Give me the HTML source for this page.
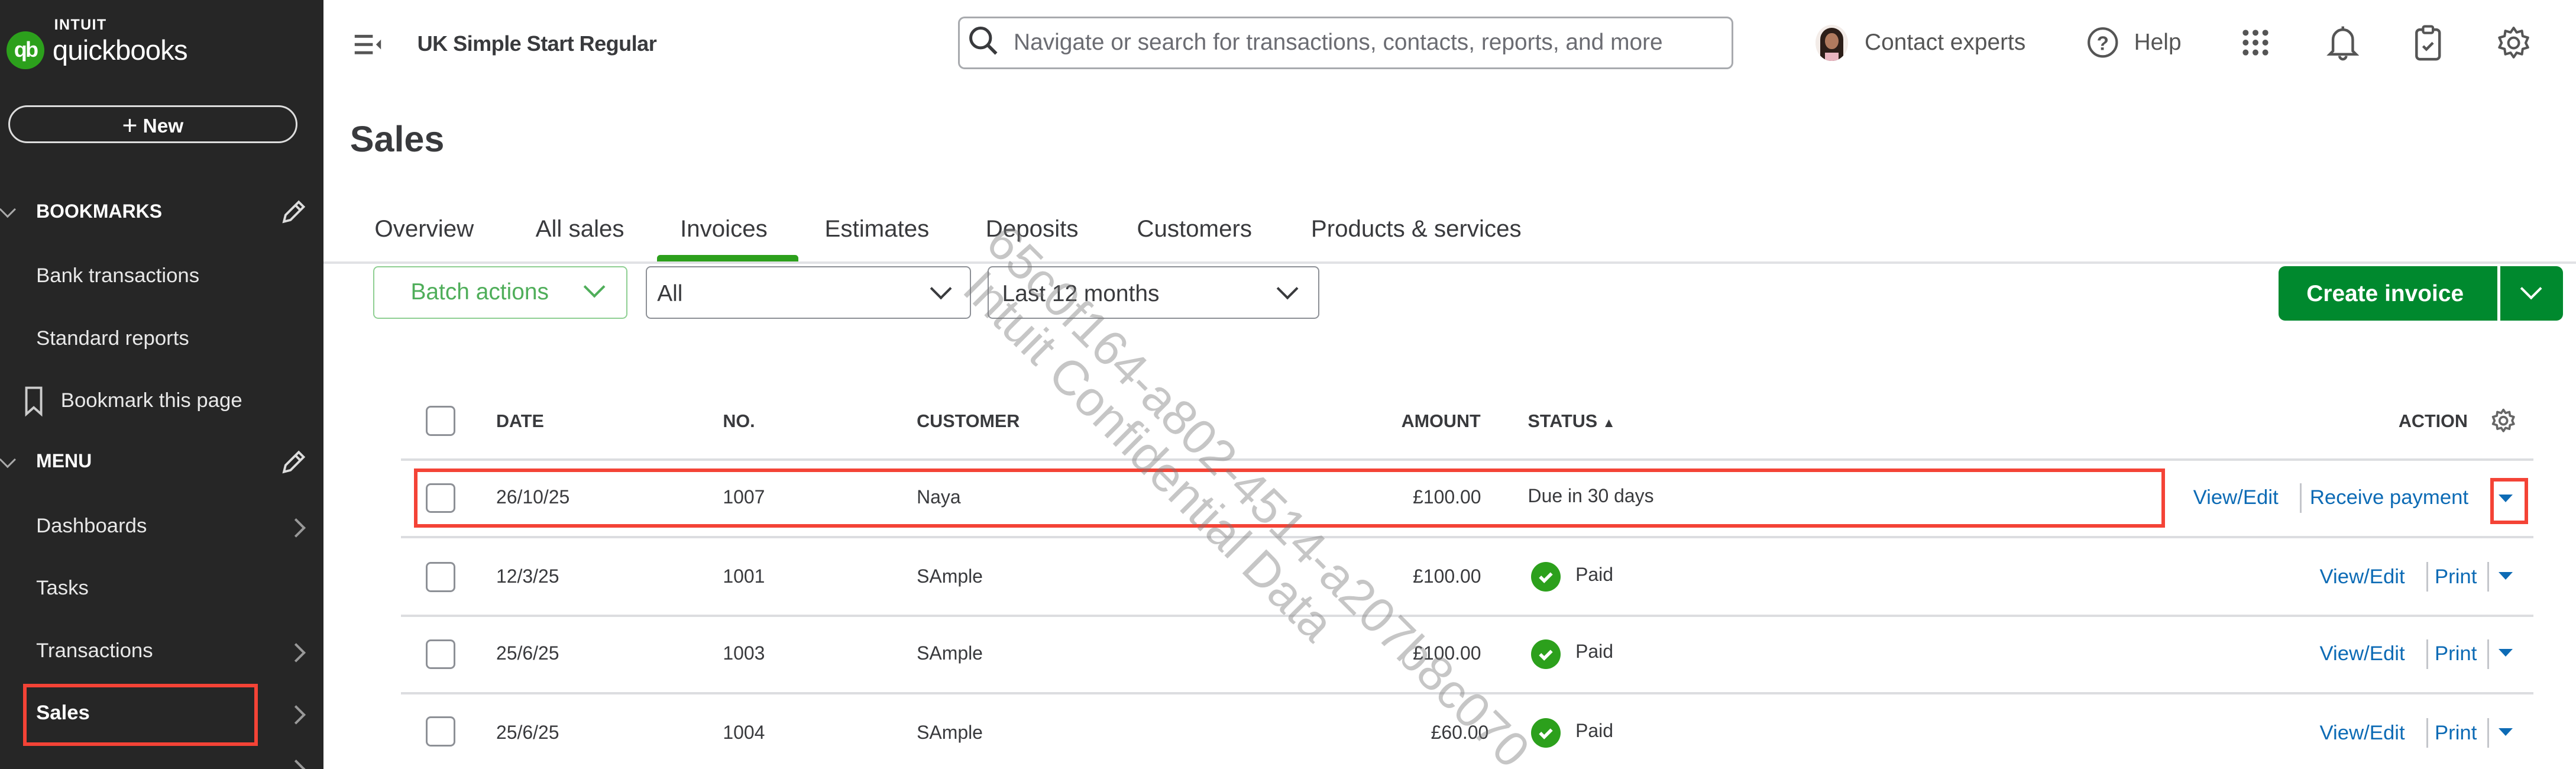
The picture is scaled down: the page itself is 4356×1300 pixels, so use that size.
<!DOCTYPE html>
<html><head><meta charset="utf-8">
<style>
html,body{margin:0;padding:0;}
body{width:4356px;height:1300px;overflow:hidden;background:#fff;font-family:"Liberation Sans",sans-serif;}
#w{position:absolute;left:0;top:0;width:1568px;height:468px;zoom:2.778;overflow:hidden;background:#fff;}
.a{position:absolute;white-space:nowrap;}
.sb{position:absolute;left:0;top:0;width:197px;height:468px;background:#262626;}
.sbt{position:absolute;color:#e8e8e8;font-size:12.5px;}
.sbh{position:absolute;color:#fff;font-size:11.5px;font-weight:bold;}
.chev{position:absolute;left:176px;width:7px;height:7px;border-right:1.5px solid #999;border-top:1.5px solid #999;transform:rotate(45deg);}
.tab{position:absolute;top:131px;font-size:14.5px;color:#393a3d;}
.hd{position:absolute;top:250px;font-size:11px;font-weight:bold;color:#393a3d;}
.cb{position:absolute;left:259px;width:16px;height:16px;border:1.3px solid #8d9096;border-radius:3px;background:#fff;}
.cell{position:absolute;font-size:11.5px;color:#393a3d;}
.ln{position:absolute;left:244px;width:1298px;height:1.5px;background:#dcdde0;}
.lk{position:absolute;font-size:12.5px;color:#0d6bb5;}
.sep{position:absolute;width:1px;height:18px;background:#c4c6cb;}
.tri{position:absolute;width:0;height:0;border-left:4.5px solid transparent;border-right:4.5px solid transparent;border-top:5px solid #0d6bb5;}
.ok{position:absolute;left:932px;width:18px;height:18px;border-radius:50%;background:#2ca01c;}
.sel{position:absolute;top:162px;height:32px;border:1px solid #8d9096;border-radius:3px;box-sizing:border-box;}
.dch{position:absolute;width:8px;height:8px;border-right:1.6px solid #393a3d;border-bottom:1.6px solid #393a3d;transform:rotate(45deg);}
.ic{position:absolute;}
</style></head><body><div id="w">
<div class="sb"></div>
<div class="a" style="left:4px;top:19px;width:23px;height:23px;border-radius:50%;background:#2ca01c;color:#fff;font-size:13px;font-weight:bold;line-height:22px;text-align:center;letter-spacing:-1px;">qb</div>
<div class="a" style="left:33px;top:10px;color:#fff;font-size:9px;font-weight:bold;letter-spacing:.5px;">INTUIT</div>
<div class="a" style="left:32px;top:21px;color:#fff;font-size:17px;letter-spacing:-.3px;">quickbooks</div>
<div class="a" style="left:5px;top:64px;width:176px;height:23px;border:1.3px solid #ddd;border-radius:12px;box-sizing:border-box;color:#fff;font-size:12px;font-weight:bold;text-align:center;line-height:21px;"><span style="font-size:16px;font-weight:normal;position:relative;top:1px;">+</span> New</div>
<div class="a" style="left:1px;top:124px;width:6px;height:6px;border-right:1.3px solid #aaa;border-bottom:1.3px solid #aaa;transform:rotate(45deg);"></div>
<div class="sbh" style="left:22px;top:122px;">BOOKMARKS</div>
<svg class="ic" style="left:169px;top:120px" width="18" height="18" viewBox="0 0 18 18"><path d="M4 15l1-4 8-8 3 3-8 8z M11 5l3 3" fill="none" stroke="#ddd" stroke-width="1.4"/></svg>
<div class="sbt" style="left:22px;top:161px;">Bank transactions</div>
<div class="sbt" style="left:22px;top:199px;">Standard reports</div>
<svg class="ic" style="left:14px;top:234px" width="14" height="20" viewBox="0 0 14 20"><path d="M2 2h9v16l-4.5-4-4.5 4z" fill="none" stroke="#ccc" stroke-width="1.4"/></svg>
<div class="sbt" style="left:37px;top:237px;">Bookmark this page</div>
<div class="a" style="left:1px;top:276px;width:6px;height:6px;border-right:1.3px solid #aaa;border-bottom:1.3px solid #aaa;transform:rotate(45deg);"></div>
<div class="sbh" style="left:22px;top:274px;">MENU</div>
<svg class="ic" style="left:169px;top:272px" width="18" height="18" viewBox="0 0 18 18"><path d="M4 15l1-4 8-8 3 3-8 8z M11 5l3 3" fill="none" stroke="#ddd" stroke-width="1.4"/></svg>
<div class="sbt" style="left:22px;top:313px;">Dashboards</div><div class="chev" style="top:317px;"></div>
<div class="sbt" style="left:22px;top:351px;">Tasks</div>
<div class="sbt" style="left:22px;top:389px;">Transactions</div><div class="chev" style="top:393px;"></div>
<div class="sbt" style="left:22px;top:427px;color:#fff;font-weight:bold;">Sales</div><div class="chev" style="top:431px;"></div>
<div class="a" style="left:14px;top:416px;width:143px;height:38px;border:2.5px solid #f44336;box-sizing:border-box;"></div>
<div class="chev" style="top:464px;"></div>
<svg class="ic" style="left:215px;top:19px" width="20" height="16" viewBox="0 0 20 16"><path d="M1 3h11M1 8h11M1 13h11" stroke="#555" stroke-width="1.8"/><path d="M17 5l-3 3 3 3z" fill="#555"/></svg>
<div class="a" style="left:254px;top:19px;font-size:13px;color:#393a3d;font-weight:bold;letter-spacing:-.2px;">UK Simple Start Regular</div>
<div class="a" style="left:583px;top:10px;width:472px;height:32px;border:1.3px solid #a8aaae;border-radius:4px;box-sizing:border-box;"></div>
<svg class="ic" style="left:589px;top:15px" width="20" height="20" viewBox="0 0 20 20"><circle cx="8" cy="8" r="6" fill="none" stroke="#393a3d" stroke-width="1.8"/><path d="M12.5 12.5l5 5" stroke="#393a3d" stroke-width="2"/></svg>
<div class="a" style="left:617px;top:18px;font-size:14px;color:#6b6c72;width:430px;overflow:hidden;">Navigate or search for transactions, contacts, reports, and more</div>
<div class="a" style="left:1105px;top:15px;width:20px;height:22px;border-radius:50%;background:#f3ece8;overflow:hidden;"><div style="position:absolute;left:3px;top:2px;width:14px;height:20px;border-radius:7px 7px 2px 2px;background:#2c1e18;"></div><div style="position:absolute;left:6px;top:5px;width:8px;height:10px;border-radius:50%;background:#b07a5e;"></div><div style="position:absolute;left:6px;top:17px;width:8px;height:6px;background:#e9b6c0;"></div></div>
<div class="a" style="left:1135px;top:18px;font-size:14px;color:#555;">Contact experts</div>
<svg class="ic" style="left:1270px;top:16px" width="20" height="20" viewBox="0 0 20 20"><circle cx="10" cy="10" r="8.5" fill="none" stroke="#555" stroke-width="1.5"/><text x="10" y="14.5" font-size="12" font-family="Liberation Sans" font-weight="bold" text-anchor="middle" fill="#555">?</text></svg>
<div class="a" style="left:1299px;top:18px;font-size:14px;color:#555;">Help</div>
<svg class="ic" style="left:1364px;top:17px" width="18" height="18" viewBox="0 0 18 18" fill="#555"><circle cx="3" cy="3" r="1.8"/><circle cx="9" cy="3" r="1.8"/><circle cx="15" cy="3" r="1.8"/><circle cx="3" cy="9" r="1.8"/><circle cx="9" cy="9" r="1.8"/><circle cx="15" cy="9" r="1.8"/><circle cx="3" cy="15" r="1.8"/><circle cx="9" cy="15" r="1.8"/><circle cx="15" cy="15" r="1.8"/></svg>
<svg class="ic" style="left:1416px;top:14px" width="20" height="24" viewBox="0 0 20 24"><path d="M10 2v2M4 17V10a6 6 0 0 1 12 0v7l2 2H2z M8 20a2 2 0 0 0 4 0" fill="none" stroke="#555" stroke-width="1.6"/></svg>
<svg class="ic" style="left:1468px;top:14px" width="20" height="24" viewBox="0 0 20 24"><rect x="3" y="4" width="14" height="18" rx="2" fill="none" stroke="#555" stroke-width="1.6"/><rect x="7" y="2" width="6" height="4" rx="1" fill="#fff" stroke="#555" stroke-width="1.5"/><path d="M7 14l2 2 4-4" fill="none" stroke="#555" stroke-width="1.6"/></svg>
<svg class="ic" style="left:1519px;top:15px" width="22" height="22" viewBox="0 0 24 24"><path d="M12 2l2 3 3.5-1 .5 3.5 3.5 1-1.5 3.5 1.5 3-3.5 1-.5 3.5-3.5-1-2 3-2-3-3.5 1-.5-3.5-3.5-1L4 12 2.5 8.5 6 7.5 6.5 4 10 5z" fill="none" stroke="#555" stroke-width="1.6" stroke-linejoin="round"/><circle cx="12" cy="12" r="3.5" fill="none" stroke="#555" stroke-width="1.6"/></svg>
<div class="a" style="left:213px;top:72px;font-size:22px;font-weight:bold;color:#393a3d;">Sales</div>
<div class="tab" style="left:228px;">Overview</div>
<div class="tab" style="left:326px;">All sales</div>
<div class="tab" style="left:414px;">Invoices</div>
<div class="tab" style="left:502px;">Estimates</div>
<div class="tab" style="left:600px;">Deposits</div>
<div class="tab" style="left:692px;">Customers</div>
<div class="tab" style="left:798px;">Products &amp; services</div>
<div class="a" style="left:197px;top:159px;width:1371px;height:1.5px;background:#e1e2e5;"></div>
<div class="a" style="left:400px;top:155px;width:86px;height:4px;background:#2ca01c;border-radius:2px 2px 0 0;"></div>
<div class="sel" style="left:227px;width:155px;border-color:#8fcf93;"></div>
<div class="a" style="left:250px;top:170px;font-size:14px;color:#4fae5a;">Batch actions</div>
<div class="dch" style="left:357px;top:170px;border-color:#4fae5a;"></div>
<div class="sel" style="left:393px;width:198px;"></div>
<div class="a" style="left:400px;top:171px;font-size:14px;color:#393a3d;">All</div>
<div class="dch" style="left:568px;top:171px;"></div>
<div class="sel" style="left:601px;width:202px;"></div>
<div class="a" style="left:610px;top:171px;font-size:14px;color:#393a3d;">Last 12 months</div>
<div class="dch" style="left:779px;top:171px;"></div>
<div class="a" style="left:1387px;top:162px;width:133px;height:33px;background:#00892e;border-radius:4px 0 0 4px;"></div>
<div class="a" style="left:1404px;top:171px;font-size:14px;font-weight:bold;color:#fff;">Create invoice</div>
<div class="a" style="left:1522px;top:162px;width:38px;height:33px;background:#00892e;border-radius:0 4px 4px 0;"></div>
<div class="dch" style="left:1536px;top:171px;border-color:#fff;"></div>
<div class="cb" style="top:247px;"></div>
<div class="hd" style="left:302px;">DATE</div>
<div class="hd" style="left:440px;">NO.</div>
<div class="hd" style="left:558px;">CUSTOMER</div>
<div class="hd" style="left:853px;">AMOUNT</div>
<div class="hd" style="left:930px;">STATUS <span style="font-size:8px;">▲</span></div>
<div class="hd" style="left:1460px;">ACTION</div>
<svg class="ic" style="left:1516px;top:248px" width="16" height="16" viewBox="0 0 24 24"><path d="M12 2l2 3 3.5-1 .5 3.5 3.5 1-1.5 3.5 1.5 3-3.5 1-.5 3.5-3.5-1-2 3-2-3-3.5 1-.5-3.5-3.5-1L4 12 2.5 8.5 6 7.5 6.5 4 10 5z" fill="none" stroke="#666" stroke-width="2" stroke-linejoin="round"/><circle cx="12" cy="12" r="3.5" fill="none" stroke="#666" stroke-width="2"/></svg>
<div class="ln" style="top:279px;"></div>
<div class="ln" style="top:326px;"></div>
<div class="ln" style="top:374px;"></div>
<div class="ln" style="top:421px;"></div>
<div class="cb" style="top:294px;"></div>
<div class="cell" style="left:302px;top:296px;">26/10/25</div>
<div class="cell" style="left:440px;top:296px;">1007</div>
<div class="cell" style="left:558px;top:296px;">Naya</div>
<div class="cell" style="left:860px;top:296px;">£100.00</div>
<div class="cell" style="left:930px;top:295px;">Due in 30 days</div>
<div class="lk" style="left:1335px;top:296px;">View/Edit</div>
<div class="sep" style="left:1400px;top:294px;"></div>
<div class="lk" style="left:1406px;top:296px;">Receive payment</div>
<div class="tri" style="left:1521px;top:301px;"></div>
<div class="a" style="left:252px;top:285px;width:1066px;height:36px;border:2.5px solid #f44336;box-sizing:border-box;"></div>
<div class="a" style="left:1516px;top:291px;width:23px;height:28px;border:2.5px solid #f44336;box-sizing:border-box;"></div>
<div class="cb" style="top:342px;"></div>
<div class="cell" style="left:302px;top:344px;">12/3/25</div>
<div class="cell" style="left:440px;top:344px;">1001</div>
<div class="cell" style="left:558px;top:344px;">SAmple</div>
<div class="cell" style="left:860px;top:344px;">£100.00</div>
<div class="ok" style="top:342px;"><svg width="18" height="18"><path d="M5.5 9l2.5 2.5 4.5-4.5" fill="none" stroke="#fff" stroke-width="2"/></svg></div>
<div class="cell" style="left:959px;top:343px;">Paid</div>
<div class="lk" style="left:1412px;top:344px;">View/Edit</div><div class="sep" style="left:1477px;top:342px;"></div>
<div class="lk" style="left:1482px;top:344px;">Print</div><div class="sep" style="left:1514px;top:342px;"></div>
<div class="tri" style="left:1521px;top:348px;"></div>
<div class="cb" style="top:389px;"></div>
<div class="cell" style="left:302px;top:391px;">25/6/25</div>
<div class="cell" style="left:440px;top:391px;">1003</div>
<div class="cell" style="left:558px;top:391px;">SAmple</div>
<div class="cell" style="left:860px;top:391px;">£100.00</div>
<div class="ok" style="top:389px;"><svg width="18" height="18"><path d="M5.5 9l2.5 2.5 4.5-4.5" fill="none" stroke="#fff" stroke-width="2"/></svg></div>
<div class="cell" style="left:959px;top:390px;">Paid</div>
<div class="lk" style="left:1412px;top:391px;">View/Edit</div><div class="sep" style="left:1477px;top:389px;"></div>
<div class="lk" style="left:1482px;top:391px;">Print</div><div class="sep" style="left:1514px;top:389px;"></div>
<div class="tri" style="left:1521px;top:395px;"></div>
<div class="cb" style="top:436px;"></div>
<div class="cell" style="left:302px;top:439px;">25/6/25</div>
<div class="cell" style="left:440px;top:439px;">1004</div>
<div class="cell" style="left:558px;top:439px;">SAmple</div>
<div class="cell" style="left:871px;top:439px;">£60.00</div>
<div class="ok" style="top:437px;"><svg width="18" height="18"><path d="M5.5 9l2.5 2.5 4.5-4.5" fill="none" stroke="#fff" stroke-width="2"/></svg></div>
<div class="cell" style="left:959px;top:438px;">Paid</div>
<div class="lk" style="left:1412px;top:439px;">View/Edit</div><div class="sep" style="left:1477px;top:437px;"></div>
<div class="lk" style="left:1482px;top:439px;">Print</div><div class="sep" style="left:1514px;top:437px;"></div>
<div class="tri" style="left:1521px;top:443px;"></div>
<div class="a" style="left:618px;top:130px;font-size:30px;color:rgba(120,120,120,.42);transform-origin:0 0;transform:rotate(45deg);">65c0f164-a802-4514-a207b8c070</div>
<div class="a" style="left:604px;top:158px;font-size:30px;color:rgba(120,120,120,.42);transform-origin:0 0;transform:rotate(45deg);">Intuit Confidential Data</div>
</div></body></html>
